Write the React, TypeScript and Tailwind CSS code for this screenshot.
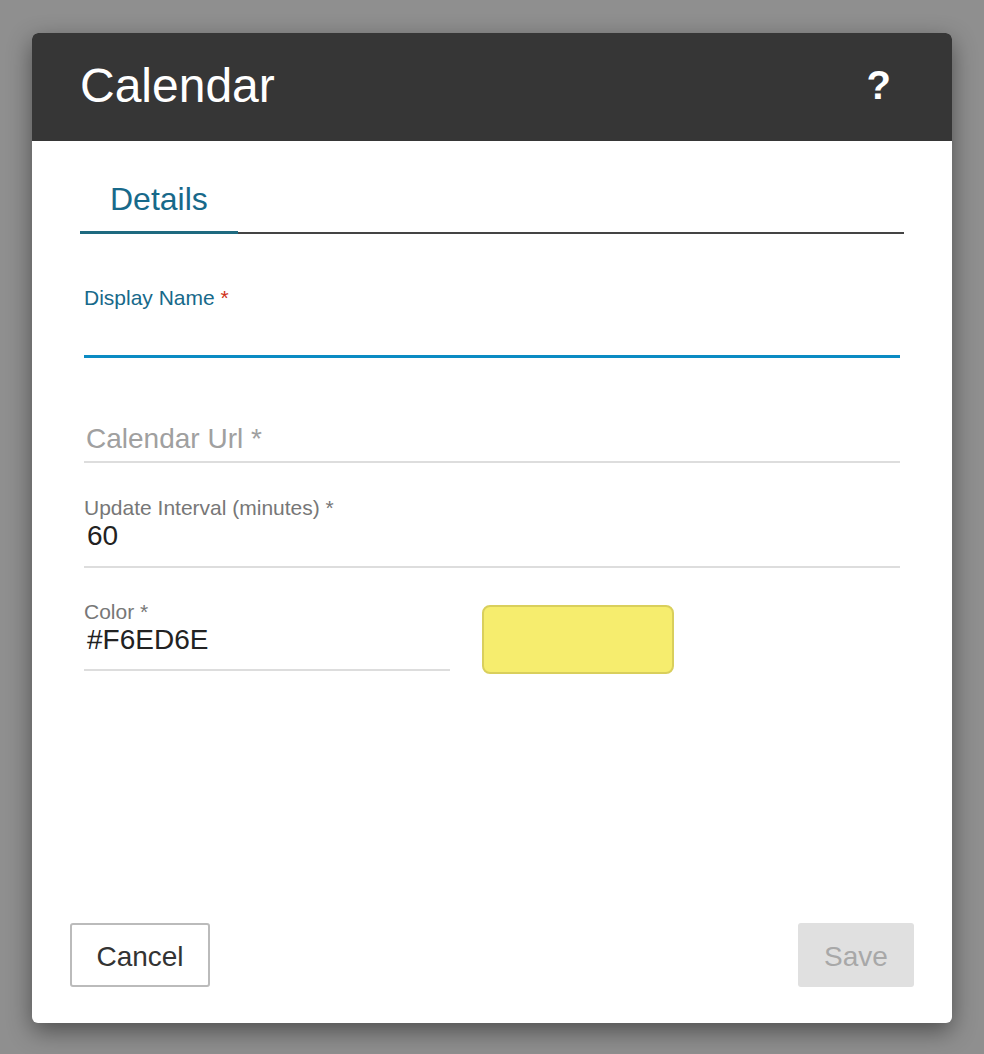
import React from "react";

const font = { fontFamily: '"Liberation Sans", Arial, sans-serif' };

export default function App() {
  return (
    <div className="min-h-[1054px] w-full bg-[#8f8f8f] pt-[33px]" style={font}>
      <div className="ml-[32px] flex h-[990px] w-[920px] flex-col rounded-[6px] bg-white shadow-[0_8px_24px_rgba(0,0,0,0.45)]">
        {/* Header */}
        <div className="flex h-[108px] items-center justify-between rounded-t-[6px] bg-[#363636] pl-[48px] pr-[61px]">
          <h1 className="-mt-[3px] text-[48px] leading-none text-white">Calendar</h1>
          <span className="-mt-[5px] text-[40px] font-bold leading-none text-white">?</span>
        </div>

        <div className="flex flex-1 flex-col px-[48px]">
          {/* Tabs */}
          <div className="mt-[38px] flex items-end">
            <div className="border-b-[3px] border-[#1e6a80] px-[30px] pb-[12px] text-[32px] leading-[40px] text-[#17698a]">
              Details
            </div>
            <div className="flex-1 border-b-2 border-[#444]" />
          </div>

          <div className="px-[4px]">
            {/* Display Name */}
            <div className="mt-[52px]">
              <div className="text-[21px] leading-[24px] text-[#17698a]">
                Display Name <span className="text-[#d0321a]">*</span>
              </div>
              <div className="h-[48px] border-b-[3px] border-[#0b8bc3]" />
            </div>

            {/* Calendar Url */}
            <div className="mt-[65px] border-b-2 border-[#dddddd] pb-[6px]">
              <div className="pl-[2px] text-[28px] leading-[32px] text-[#a0a0a0]">Calendar Url *</div>
            </div>

            {/* Update Interval */}
            <div className="mt-[33px] border-b-2 border-[#dddddd] pb-[14px]">
              <div className="text-[21px] leading-[24px] text-[#777777]">Update Interval (minutes) *</div>
              <div className="pl-[3px] text-[28px] leading-[32px] text-[#222222]">60</div>
            </div>

            {/* Color */}
            <div className="mt-[32px] flex items-start gap-[32px]">
              <div className="w-[366px] border-b-2 border-[#dddddd] pb-[13px]">
                <div className="text-[21px] leading-[24px] text-[#777777]">Color *</div>
                <div className="pl-[3px] text-[28px] leading-[32px] text-[#222222]">#F6ED6E</div>
              </div>
              <div className="mt-[5px] h-[69px] w-[192px] rounded-[8px] border-2 border-[#d9cf5c] bg-[#f6ed6e]" />
            </div>
          </div>
        </div>

        {/* Footer */}
        <div className="flex items-center justify-between px-[38px] pb-[36px]">
          <button className="h-[64px] w-[140px] rounded-[3px] border-2 border-[#bbbbbb] bg-white pt-[4px] text-[28px] text-[#333333]">
            Cancel
          </button>
          <button className="h-[64px] w-[116px] rounded-[3px] bg-[#e0e0e0] pt-[4px] text-[28px] text-[#a8a8a8]">
            Save
          </button>
        </div>
      </div>
    </div>
  );
}
